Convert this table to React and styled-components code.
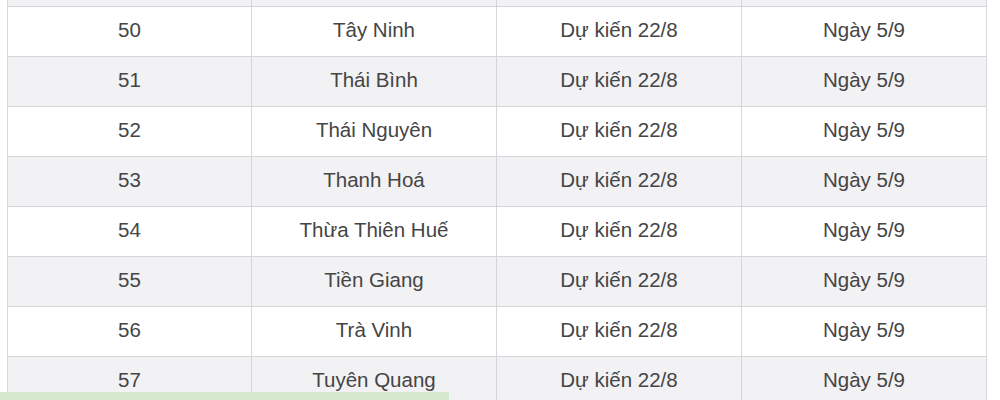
import React from "react";
import styled, { createGlobalStyle } from "styled-components";

// the first row is only a sliver at the top edge, so it holds no text
const rows = [
  ["", "", "", ""],
  ["50", "Tây Ninh", "Dự kiến 22/8", "Ngày 5/9"],
  ["51", "Thái Bình", "Dự kiến 22/8", "Ngày 5/9"],
  ["52", "Thái Nguyên", "Dự kiến 22/8", "Ngày 5/9"],
  ["53", "Thanh Hoá", "Dự kiến 22/8", "Ngày 5/9"],
  ["54", "Thừa Thiên Huế", "Dự kiến 22/8", "Ngày 5/9"],
  ["55", "Tiền Giang", "Dự kiến 22/8", "Ngày 5/9"],
  ["56", "Trà Vinh", "Dự kiến 22/8", "Ngày 5/9"],
  ["57", "Tuyên Quang", "Dự kiến 22/8", "Ngày 5/9"],
];

const GlobalStyle = createGlobalStyle`
  html, body {
    margin: 0;
    padding: 0;
    background: #ffffff;
    overflow: hidden;
  }
  body {
    font-family: "Liberation Sans", Arial, sans-serif;
  }
`;

const Page = styled.div`
  position: relative;
  width: 1000px;
  height: 400px;
  overflow: hidden;
  background: #ffffff;
`;

const Table = styled.div`
  margin: -44px 0 0 7px;
  width: 980px;
  display: flex;
  flex-direction: column;
`;

const Row = styled.div`
  display: grid;
  grid-template-columns: 244px 245px 245px 246px;
  height: 50px;
  box-sizing: border-box;
  border-top: 1px solid #d6d5d9;
  background: ${(p) => (p.$alt ? "#f2f1f4" : "#ffffff")};
`;

const Cell = styled.div`
  box-sizing: border-box;
  border-left: 1px solid #d6d5d9;
  display: flex;
  align-items: center;
  justify-content: center;
  font-size: 20.5px;
  color: #454545;
  padding-bottom: 3px;

  &:last-child {
    border-right: 1px solid #d6d5d9;
  }
`;

const GreenBar = styled.div`
  position: absolute;
  left: 0;
  top: 392px;
  width: 449px;
  height: 8px;
  background: #d4e9cd;
`;

export default function App() {
  return (
    <Page>
      <GlobalStyle />
      <Table>
        {rows.map((r, i) => (
          <Row key={i} $alt={i % 2 === 0}>
            {r.map((c, j) => (
              <Cell key={j}>{c}</Cell>
            ))}
          </Row>
        ))}
      </Table>
      <GreenBar />
    </Page>
  );
}
